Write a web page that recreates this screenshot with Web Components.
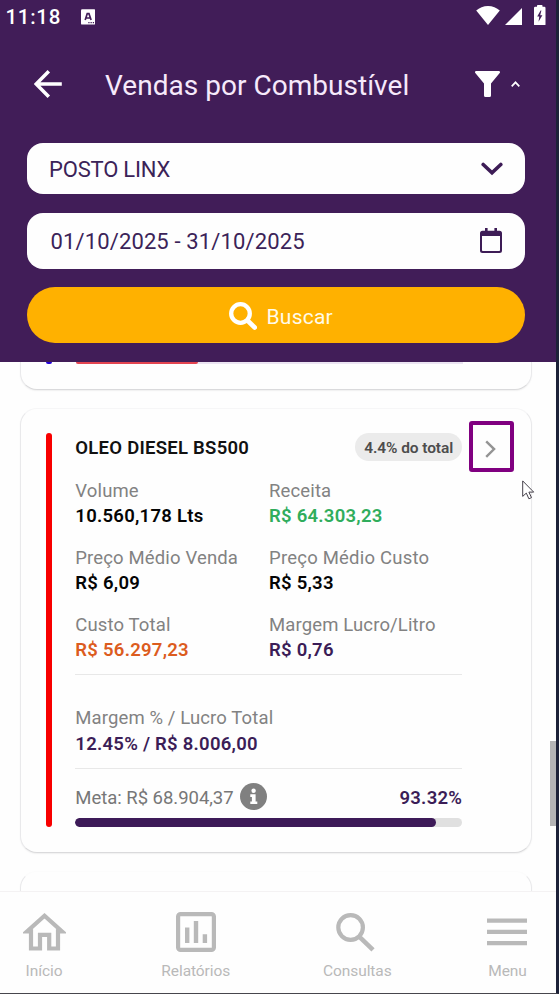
<!DOCTYPE html>
<html lang="pt-BR">
<head>
<meta charset="utf-8">
<title>Vendas por Combustível</title>
<style>
html,body{margin:0;height:100%;overflow:hidden;background:#fefefe}
body{font-family:Roboto,"Liberation Sans",sans-serif}
</style>
</head>
<body>
<fuel-sales-page></fuel-sales-page>
<script>
const define = (name, html, setup) => {
  const tpl = document.createElement('template');
  tpl.innerHTML = html;
  customElements.define(name, class extends HTMLElement {
    connectedCallback() {
      if (this.shadowRoot) return;
      const root = this.attachShadow({mode: 'open'});
      root.append(tpl.content.cloneNode(true));
      if (setup) setup(this, root);
    }
  });
};

const ICONS = {
  keyboard: ['0 0 15 16', '<rect width="14.6" height="15.8" rx="1.2" fill="#fff"/><path d="M4.3 11 6.4 4.6h1.8L10.4 11M5.1 9h4.4" fill="none" stroke="#411d58" stroke-width="1.7"/><path d="M7.5 13.8h1.3m1 0h1.3m1 0h1.3" stroke="#411d58" stroke-width="1.1"/>'],
  wifi: ['0 0 24 19', '<path d="M12 19 .2 4.6C3.300 1.700 7.500 0 12 0s8.700 1.700 11.800 4.600z" fill="#fff"/>'],
  signal: ['0 0 17 17', '<path d="M0 17 17 0v17z" fill="#fff"/>'],
  battery: ['0 0 11.500 20.500', '<path d="M3 1.800V.8Q3 0 3.800 0h3.900q.8 0 .8.800v1h1.800q1.200 0 1.200 1.200v16.300q0 1.200-1.200 1.200H1.200Q0 20.500 0 19.300V3q0-1.200 1.200-1.200z" fill="#fff"/><path d="M6.600 5.500 3.200 11.500h2.100l-.8 5.300 3.900-6.600H6.200L7.400 5.500z" fill="#411d58"/>'],
  back: ['0 0 28 28', '<path d="M27.800 14H2.500M14.800 1.300 2.200 14l12.600 12.700" fill="none" stroke="#fff" stroke-width="3.500"/>'],
  filter: ['0 0 25 26', '<path d="M.8 0h23.400q1.300.6.500 2L16 12.400v12q0 1.600-1.500 1.600h-4Q9 26 9 24.400v-12L.3 2Q-.5.600.8 0z" fill="#fff"/>'],
  up: ['0 0 9 6', '<path d="M.7 5.300 4.500 1.300l3.800 4" fill="none" stroke="#fff" stroke-width="1.700"/>'],
  down: ['0 0 22 14', '<path d="m2.200 2.500 8.800 8.300 8.800-8.300" fill="none" stroke="#3d1c56" stroke-width="3.600" stroke-linecap="round" stroke-linejoin="miter"/>'],
  calendar: ['0 0 22 25', '<path d="M2.500 2.800h17q2.500 0 2.500 2.500v17.200q0 2.500-2.500 2.500h-17Q0 25 0 22.500V5.300q0-2.500 2.500-2.500zM2 8v14.200q0 .8.800.8h16.400q.8 0 .8-.8V8z" fill="#3d1c56" fill-rule="evenodd"/><path d="M6.300 0v5m9.400-5v5" stroke="#3d1c56" stroke-width="2.600"/>'],
  search: ['0 0 28 28', '<circle cx="11.500" cy="11.500" r="9.300" fill="none" stroke="#fff" stroke-width="4.300"/><path d="m18.500 18.500 7.200 7" stroke="#fff" stroke-width="4.600" stroke-linecap="round"/>'],
  next: ['0 0 11 18', '<path d="m1.200 1.300 7.900 7.800-7.900 7.700" fill="none" stroke="#949494" stroke-width="2.400"/>'],
  info: ['0 0 27 27', '<circle cx="13.500" cy="13.500" r="13.500" fill="#808080"/><circle cx="13.600" cy="7.700" r="2.200" fill="#fff"/><path d="M10.300 11.300h5.300v7.200h1.700v2.600h-7v-2.600h1.600v-4.600h-1.600z" fill="#fff"/>'],
  home: ['0 0 43 38', '<path d="M21.500 2.800 4.300 18.300H8v17.200h9V21.800h9.200v13.700H35V18.300h3.700z" fill="none" stroke="#b9b9b9" stroke-width="4.200"/>'],
  reports: ['0 0 40 40', '<rect x="2.100" y="2.100" width="35.800" height="35.800" rx="2.500" fill="none" stroke="#b9b9b9" stroke-width="4.200"/><path d="M11.200 15.500V31M20 9v22M28.900 22.200V31" stroke="#b9b9b9" stroke-width="4.400"/>'],
  lookup: ['0 0 39 39', '<circle cx="14.600" cy="14.500" r="12.300" fill="none" stroke="#b9b9b9" stroke-width="4.200"/><path d="m24 24.300 13 12.500" stroke="#b9b9b9" stroke-width="4.600"/>'],
  menu: ['0 0 40 28', '<path d="M0 2.600h40M0 13.900h40M0 25.100h40" stroke="#b9b9b9" stroke-width="4.400"/>'],
  cursor: ['0 0 13 20', '<path d="M.7.900v15.500l3.600-3.300 2.600 5.700 2.600-1.200-2.600-5.500h4.800z" fill="#fff" stroke="#45404a" stroke-width="1" stroke-linejoin="round"/>']
};

define('app-icon', `<style>:host{display:block;flex:none}svg{display:block;width:100%;height:100%}</style>`, (el, root) => {
  const [box, art] = ICONS[el.getAttribute('name')];
  const holder = document.createElement('template');
  holder.innerHTML = `<svg viewBox="${box}" aria-hidden="true">${art}</svg>`;
  root.append(holder.content);
});

define('status-bar', `
<style>
:host{display:flex;height:33px;padding:0 10.500px 0 5.500px;box-sizing:border-box;align-items:center;color:#fff}
time{font-size:20.500px;font-weight:500;letter-spacing:.7px;line-height:33px;padding-top:2px}
.kb{width:14.600px;height:16px;margin:0 auto 0 19.800px}
.wifi{width:24px;height:19px;margin-top:-2px}
.sig{width:17px;height:17px;margin-left:5px}
.bat{width:11.500px;height:20.500px;margin:-3px 0 0 12px}
</style>
<time>11:18</time><app-icon class="kb" name="keyboard"></app-icon>
<app-icon class="wifi" name="wifi"></app-icon><app-icon class="sig" name="signal"></app-icon><app-icon class="bat" name="battery"></app-icon>`);

define('title-bar', `
<style>
:host{display:flex;align-items:center;height:109.500px;padding:0 36px 7px 34px;box-sizing:border-box;color:#f6e9fb}
h1{margin:4px auto 0 43px;font-size:28px;font-weight:400;letter-spacing:.03px;line-height:36px;white-space:nowrap}
.back{width:28px;height:28px}
.filter{width:25px;height:26px}
.up{width:9px;height:6px;margin:0 0 0 11px}
</style>
<app-icon class="back" name="back"></app-icon><h1><slot></slot></h1>
<app-icon class="filter" name="filter"></app-icon><app-icon class="up" name="up"></app-icon>`);

define('form-field', `
<style>
:host{display:flex;align-items:center;justify-content:space-between;box-sizing:border-box;background:#fefefe;border-radius:16px;color:#3b2358;font-size:22px;white-space:nowrap}
</style>
<slot></slot><slot name="icon"></slot>`);

define('search-button', `
<style>
:host{display:block}
button{all:unset;box-sizing:border-box;width:100%;height:56px;border-radius:28px;background:#ffb100;display:flex;align-items:center;justify-content:center;gap:9.500px;padding-left:10px;color:#fffbe9;font-size:21px;letter-spacing:.22px;line-height:56px}
app-icon{width:28px;height:28px;margin-top:1px}
span{padding-top:3px}
</style>
<button><app-icon name="search"></app-icon><span><slot></slot></span></button>`);

define('filter-header', `
<style>
:host{display:flex;flex-direction:column;height:362px;flex:none;background:#411d58}
form{display:flex;flex-direction:column;padding:0 31px 0 27px}
.station{height:51.500px;padding:2px 22px 0 22px;letter-spacing:-.19px}
.period{height:56px;margin:18.500px 0;padding:2px 23px 0 23.500px;letter-spacing:.13px}
.down{width:22px;height:14px;margin-top:-1px}
.cal{width:22px;height:25px;margin-top:-2px}
</style>
<status-bar></status-bar>
<title-bar>Vendas por Combustível</title-bar>
<form>
<form-field class="station">POSTO LINX<app-icon slot="icon" class="down" name="down"></app-icon></form-field>
<form-field class="period">01/10/2025 - 31/10/2025<app-icon slot="icon" class="cal" name="calendar"></app-icon></form-field>
<search-button>Buscar</search-button>
</form>`);

define('metric-item', `
<style>
:host{display:block;font-size:18.500px;line-height:25.700px;white-space:nowrap}
.label{color:#828282;letter-spacing:var(--label-ls,.14px)}
.value{color:var(--value-color,#050505);font-weight:600;letter-spacing:.26px}
</style>
<div class="label"></div><div class="value"><slot></slot></div>`, (el, root) => {
  root.querySelector('.label').textContent = el.getAttribute('label');
});

define('progress-meter', `
<style>
:host{display:block;height:9px;border-radius:4.500px;background:#e0e0e0;overflow:hidden}
div{height:100%;border-radius:inherit;background:#3d1a58}
</style><div></div>`, (el, root) => {
  root.querySelector('div').style.width = el.getAttribute('value') + '%';
});

define('card-shell', `
<style>
:host{display:block;box-sizing:border-box;margin:0 24px 0 20px;border-radius:17px;background:#fefefe;border:1px solid #e9e9eb;border-top-color:#f6f6f7;border-bottom-color:#dadadc;box-shadow:0 1px 1.500px rgba(0,0,0,.06)}
</style><slot></slot>`);

define('fuel-card', `
<style>
:host{display:block}
.body{display:grid;grid-template-columns:6px 410px 1fr;height:394px;padding:24.500px 17px 25px 25px}
.accent{background:#f80000;border-radius:3px}
.main{padding-left:23.300px;width:387px}
.head{display:flex;justify-content:space-between;align-items:center;height:28px}
h2{margin:1px 0 0;font-size:18.500px;font-weight:600;letter-spacing:.26px;line-height:28px;color:#111}
.badge{height:28px;border-radius:14px;background:#ebebeb;padding:0 9px;box-sizing:border-box;width:107px;color:#4d4d4d;font-size:15.500px;font-weight:600;letter-spacing:-.1px;line-height:30px;white-space:nowrap}
.grid{display:grid;grid-template-columns:193.700px 1fr;row-gap:15.600px;padding:17.500px 0 10.300px;border-bottom:1.500px solid #e8e8e8}
.green{--value-color:#30ad5c}.orange{--value-color:#dc5c1e}.purple{--value-color:#3b1d57}
.profit{padding:31px 0 10.500px;border-bottom:1.500px solid #e8e8e8}
.goal{display:flex;align-items:center;height:27px;margin:14px 0 8px;font-size:18.500px;color:#777;white-space:nowrap}
.goal span,.goal b{padding-top:2px}
.goal span{letter-spacing:-.03px}
.goal app-icon{width:27px;height:27px;margin:0 auto 0 6.700px}
.goal b{font-weight:600;color:#3b1d57;letter-spacing:.29px}
.open{display:flex;box-sizing:border-box;width:44.500px;height:51px;border:4px solid #800080;border-radius:3px;align-items:center;justify-content:center;margin:-12px 0 0 7.300px;padding:4px 2px 0 0}
.open app-icon{width:11px;height:18px}
</style>
<card-shell><div class="body">
<div class="accent"></div>
<div class="main">
<div class="head"><h2>OLEO DIESEL BS500</h2><span class="badge">4.4% do total</span></div>
<div class="grid">
<metric-item label="Volume">10.560,178 Lts</metric-item>
<metric-item label="Receita" class="green">R$ 64.303,23</metric-item>
<metric-item label="Preço Médio Venda">R$ 6,09</metric-item>
<metric-item label="Preço Médio Custo" style="--label-ls:.22px">R$ 5,33</metric-item>
<metric-item label="Custo Total" class="orange">R$ 56.297,23</metric-item>
<metric-item label="Margem Lucro/Litro" class="purple">R$ 0,76</metric-item>
</div>
<div class="profit"><metric-item label="Margem % / Lucro Total" class="purple" style="--label-ls:.12px">12.45% / R$ 8.006,00</metric-item></div>
<div class="goal"><span>Meta: R$ 68.904,37</span><app-icon name="info"></app-icon><b>93.32%</b></div>
<progress-meter value="93.32"></progress-meter>
</div>
<div class="open"><app-icon name="next"></app-icon></div>
</div></card-shell>`);

define('tab-item', `
<style>
:host{display:flex;flex-direction:column;align-items:center;justify-content:space-between;color:#b9b9b9;font-size:15.500px;letter-spacing:-.08px;line-height:18px}
div{height:40px;display:flex;align-items:center}
</style>
<div><slot name="icon"></slot></div><span><slot></slot></span>`);

define('tab-bar', `
<style>
:host{display:flex;justify-content:space-between;flex:none;box-sizing:border-box;height:102px;padding:20px 28.500px 0 22.500px;background:#fefefe;border-top:1px solid #f4f2f3}
tab-item{height:67.500px}
.reports-tab{margin-left:3px}
.lookup-tab{margin-right:3px}
.home{width:43px;height:38px}.reports{width:40px;height:40px}.lookup{width:39px;height:39px;margin-right:3px}.menu{width:40px;height:28px}
</style>
<tab-item><app-icon slot="icon" class="home" name="home"></app-icon>Início</tab-item>
<tab-item class="reports-tab"><app-icon slot="icon" class="reports" name="reports"></app-icon>Relatórios</tab-item>
<tab-item class="lookup-tab"><app-icon slot="icon" class="lookup" name="lookup"></app-icon>Consultas</tab-item>
<tab-item><app-icon slot="icon" class="menu" name="menu"></app-icon>Menu</tab-item>`);

define('fuel-sales-page', `
<style>
:host{display:flex;flex-direction:column;position:relative;box-sizing:border-box;width:559px;height:994px;border-right:3px solid #1d2239;border-bottom:1px solid #47464d;background:#fefefe;overflow:hidden}
main{flex:1;min-height:0;overflow:hidden}
.previous{display:block;height:28px;border-top:0;border-radius:0 0 17px 17px}
.peek{display:grid;grid-template-columns:6px 387px;column-gap:23.500px;padding-left:25px}
.peek i{height:2px;background:#2200d8;border-radius:0 0 3px 3px}
.peek u{height:2px;background:#ebe4f2;text-decoration:none}
.peek u::before{content:"";display:block;width:122px;height:2px;background:#e34450;border-radius:0 0 3px 3px}
.current{margin-top:17.500px}
.following{height:60px;margin-top:18px;border-top-color:#fcfcfc}
.scroll{position:absolute;right:0;top:741px;width:6px;height:85px;background:#b4b4b6}
.pointer{position:absolute;left:522px;top:480px;width:13px;height:20px}
</style>
<filter-header></filter-header>
<main>
<card-shell class="previous"><div class="peek"><i></i><u></u></div></card-shell>
<fuel-card class="current"></fuel-card>
<card-shell class="following"></card-shell>
</main>
<tab-bar></tab-bar>
<div class="scroll"></div>
<app-icon class="pointer" name="cursor"></app-icon>`);
</script>
</body>
</html>
